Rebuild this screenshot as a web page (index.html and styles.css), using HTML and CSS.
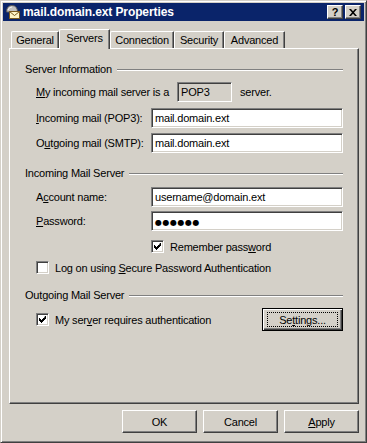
FILE: index.html
```html
<!DOCTYPE html>
<html lang="en">
<head>
  <meta charset="UTF-8" />
  <title>mail.domain.ext Properties</title>
  <link rel="stylesheet" href="styles.css">
</head>
<body>
  <div class="window">
    <div class="titlebar">
      <svg class="app-icon" width="16" height="16" viewBox="0 0 16 16">
        <path d="M1.5 8 Q1.5 1.5 7 1.5 Q12.5 1.5 12.5 8 Z" fill="#c0c0c0" stroke="#5a5a5a" stroke-width="1"/>
        <path d="M3 6 Q4 3 7 3" fill="none" stroke="#f0f0f0" stroke-width="1"/>
        <rect x="4.5" y="7.5" width="10" height="7" fill="#fff6c8" stroke="#7a5a20" stroke-width="1"/>
        <path d="M4.5 7.5 L9.5 11.5 L14.5 7.5" fill="none" stroke="#7a5a20" stroke-width="1"/>
      </svg>
      <span class="title">mail.domain.ext Properties</span>
      <div class="caption-btns">
        <div class="caption-btn help">?</div>
        <div class="caption-btn">
          <svg width="8" height="7" viewBox="0 0 8 7">
            <path d="M0 0h2l2 2.2L6 0h2L5 3.5 8 7H6L4 4.8 2 7H0l3-3.5z" fill="#000"/>
          </svg>
        </div>
      </div>
    </div>

    <div class="dialog">
      <div class="tabs">
        <div class="tab tab-general">General</div>
        <div class="tab tab-servers selected">Servers</div>
        <div class="tab tab-connection">Connection</div>
        <div class="tab tab-security">Security</div>
        <div class="tab tab-advanced">Advanced</div>
      </div>

      <div class="panel">
        <div class="group-title first"><span>Server Information</span><span class="etch"></span></div>

        <div class="row row-type">
          <span class="label label-type"><u>M</u>y incoming mail server is a</span>
          <span class="readonly">POP3</span>
          <span class="after">server.</span>
        </div>
        <div class="row row-incoming">
          <span class="label"><u>I</u>ncoming mail (POP3):</span>
          <div class="textbox">mail.domain.ext</div>
        </div>
        <div class="row row-outgoing">
          <span class="label">O<u>u</u>tgoing mail (SMTP):</span>
          <div class="textbox">mail.domain.ext</div>
        </div>

        <div class="group-title second"><span>Incoming Mail Server</span><span class="etch"></span></div>

        <div class="row row-account">
          <span class="label">A<u>c</u>count name:</span>
          <div class="textbox">username@domain.ext</div>
        </div>
        <div class="row row-password">
          <span class="label"><u>P</u>assword:</span>
          <div class="textbox"><span class="dots">●●●●●●</span></div>
        </div>
        <div class="row check-row row-remember">
          <span class="checkbox checked"><svg width="7" height="7" viewBox="0 0 7 7"><path d="M6 0h1v3h-1v1h-1v1h-1v1h-1v1h-1v-1h-1v-1h-1v-3h1v1h1v1h1v-1h1v-1h1z" fill="#000"/></svg></span>
          <span class="check-text">Remember pass<u>w</u>ord</span>
        </div>
        <div class="row check-row row-spa">
          <span class="checkbox"></span>
          <span class="check-text">Log on using <u>S</u>ecure Password Authentication</span>
        </div>

        <div class="group-title third"><span>Outgoing Mail Server</span><span class="etch"></span></div>

        <div class="row check-row row-auth">
          <span class="checkbox checked"><svg width="7" height="7" viewBox="0 0 7 7"><path d="M6 0h1v3h-1v1h-1v1h-1v1h-1v1h-1v-1h-1v-1h-1v-3h1v1h1v1h1v-1h1v-1h1z" fill="#000"/></svg></span>
          <span class="check-text">My ser<u>v</u>er requires authentication</span>
          <div class="button default settings"><span class="focus">Se<u>t</u>tings...</span></div>
        </div>
      </div>

      <div class="actions">
        <div class="button">OK</div>
        <div class="button">Cancel</div>
        <div class="button"><u>A</u>pply</div>
      </div>
    </div>
  </div>
</body>
</html>
```

FILE: styles.css
```css
* {
  margin: 0;
  padding: 0;
  box-sizing: border-box;
}

body {
  font-family: 'Liberation Sans', Arial, sans-serif;
  font-size: 11px;
  color: #000;
  background: #d4d0c8;
}

u {
  text-decoration: underline;
  text-underline-offset: 1px;
}

/* window frame */
.window {
  width: 367px;
  height: 443px;
  background: #d4d0c8;
  border: 1px solid;
  border-color: #d4d0c8 #404040 #404040 #d4d0c8;
  box-shadow: inset 1px 1px #fff, inset -1px -1px #808080;
  padding: 2px;
}

.titlebar {
  height: 18px;
  background: #0a246a;
  display: flex;
  align-items: center;
}

.app-icon {
  margin-left: 2px;
  flex-shrink: 0;
}

.title {
  margin-left: 2px;
  color: #fff;
  font-weight: bold;
  font-size: 12px;
  letter-spacing: -0.1px;
}

.caption-btns {
  margin-left: auto;
  margin-right: 3px;
  display: flex;
  gap: 2px;
}

.caption-btn {
  width: 16px;
  height: 14px;
  background: #d4d0c8;
  border: 1px solid;
  border-color: #fff #404040 #404040 #fff;
  box-shadow: inset -1px -1px #808080;
  display: flex;
  align-items: center;
  justify-content: center;
}

.caption-btn.help {
  font-weight: bold;
  font-size: 11px;
  line-height: 12px;
}

/* dialog body */
.dialog {
  padding: 8px 5px 0 6px;
  letter-spacing: -0.2px;
}

.tabs {
  display: flex;
  align-items: flex-end;
  height: 19px;
  padding-left: 2px;
}

.tab {
  height: 17px;
  border-top: 1px solid #fff;
  border-left: 1px solid #fff;
  border-right: 1px solid #404040;
  box-shadow: inset -1px 0 #808080;
  border-top-left-radius: 2px;
  border-top-right-radius: 1px;
  text-align: center;
  line-height: 16px;
  background: #d4d0c8;
}

.tab-general { width: 48px; }
.tab-servers { width: 51px; }
.tab-connection { width: 64px; }
.tab-security { width: 50px; }
.tab-advanced { width: 61px; }

.tab.selected {
  height: 20px;
  margin-bottom: -1px;
  position: relative;
  z-index: 1;
  line-height: 16px;
}

.panel {
  height: 356px;
  border: 1px solid;
  border-color: #fff #404040 #404040 #fff;
  box-shadow: inset -1px -1px #808080;
  padding: 0 15px;
  display: flex;
  flex-direction: column;
}

.group-title {
  display: flex;
  align-items: center;
  height: 13px;
  line-height: 13px;
}

.group-title .etch {
  flex: 1;
  margin-left: 5px;
  border-top: 1px solid #808080;
  border-bottom: 1px solid #fff;
}

.group-title.first { margin-top: 14px; }
.group-title.second { margin-top: 14px; }
.group-title.third { margin-top: 15px; }

.row {
  display: flex;
  align-items: center;
  padding-left: 11px;
}

.label {
  width: 115px;
  flex-shrink: 0;
  white-space: nowrap;
}

.label-type {
  width: 141px;
}

.row-type { margin-top: 6px; height: 20px; }
.row-incoming { margin-top: 6px; }
.row-outgoing { margin-top: 5px; }
.row-account { margin-top: 7px; }
.row-password { margin-top: 4px; }
.row-remember { margin-top: 9px; padding-left: 126px; }
.row-spa { margin-top: 8px; }
.row-auth { margin-top: 6px; }

.textbox,
.readonly {
  height: 20px;
  border: 1px solid;
  border-color: #808080 #fff #fff #808080;
  box-shadow: inset 1px 1px #404040, inset -1px -1px #d4d0c8;
  padding-left: 3px;
  line-height: 18px;
  white-space: nowrap;
}

.textbox {
  width: 192px;
  background: #fff;
}

.readonly {
  width: 55px;
  background: #d4d0c8;
}

.after {
  margin-left: 8px;
}

.dots {
  font-family: 'DejaVu Sans', sans-serif;
  font-size: 8px;
  letter-spacing: 0.5px;
}

.check-row {
  height: 13px;
}

.checkbox {
  width: 13px;
  height: 13px;
  flex-shrink: 0;
  background: #fff;
  border: 1px solid;
  border-color: #808080 #fff #fff #808080;
  box-shadow: inset 1px 1px #404040, inset -1px -1px #d4d0c8;
  display: flex;
  align-items: center;
  justify-content: center;
}

.check-text {
  margin-left: 6px;
  white-space: nowrap;
}

.row-auth {
  height: 23px;
}

/* push buttons */
.button {
  width: 75px;
  height: 23px;
  background: #d4d0c8;
  border: 1px solid;
  border-color: #fff #404040 #404040 #fff;
  box-shadow: inset -1px -1px #808080;
  display: flex;
  align-items: center;
  justify-content: center;
}

.button.default {
  border: 1px solid #000;
  box-shadow: inset 1px 1px #fff, inset -1px -1px #404040, inset -2px -2px #808080;
}

.settings {
  width: 81px;
  margin-left: auto;
}

.focus {
  display: flex;
  align-items: center;
  justify-content: center;
  width: 71px;
  height: 15px;
  border: 1px dotted #000;
}

.actions {
  display: flex;
  justify-content: flex-end;
  gap: 6px;
  margin-top: 6px;
}
```
